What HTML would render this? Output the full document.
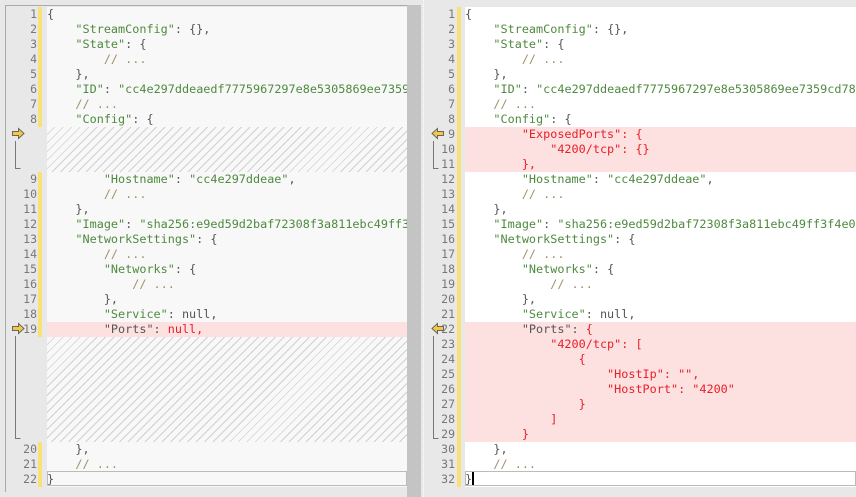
<!DOCTYPE html>
<html><head><meta charset="utf-8"><style>
*{margin:0;padding:0;box-sizing:border-box}
body{width:856px;height:497px;background:#e8e8e8;position:relative;overflow:hidden;font-family:"DejaVu Sans Mono","Liberation Mono",monospace;font-size:11.8px}
.abs{position:absolute}
.row{position:absolute;height:15px;line-height:15px;white-space:pre;overflow:hidden}
.num{position:absolute;height:15px;line-height:15px;text-align:right;color:#777;font-size:11.5px}
.s{color:#4e8a3e}.p{color:#555}.c{color:#a0906a}.r{color:#e8202a}
.hatch{position:absolute;background-color:#f8f8f8;background-image:repeating-linear-gradient(135deg,transparent 0 5px,#d0d0d0 5px 6px)}
</style></head><body>
<div class="abs" style="left:5px;top:5px;width:403px;height:487px;border-left:1px solid #aaa;border-top:1px solid #aaa"></div>
<div class="abs" style="left:47px;top:7px;width:360px;height:480px;background:#f8f8f8"></div>
<div class="abs" style="left:407px;top:5px;width:14px;height:492px;background:#c4c4c4"></div>
<div class="abs" style="left:423px;top:0;width:0;height:497px;border-left:1px dotted #fff"></div>
<div class="abs" style="left:465px;top:7px;width:391px;height:480px;background:#fff"></div>
<div class="hatch" style="left:47px;top:127px;width:360px;height:45px"></div>
<div class="hatch" style="left:47px;top:337px;width:360px;height:105px"></div>
<div id="L"></div><div id="R"></div>
<script>
const E=s=>s.replace(/&/g,'&amp;').replace(/</g,'&lt;');
function fmt(t){
 let out='';const re=/("[^"]*"?)|(\/\/ \.\.\.)|([^"\/]+)/g;let m;
 while(m=re.exec(t)){if(m[1])out+='<span class="s">'+E(m[1])+'</span>';else if(m[2])out+='<span class="c">'+m[2]+'</span>';else out+='<span class="p">'+E(m[3])+'</span>';}
 return out;}
const left=[
['{'],['    "StreamConfig": {},'],['    "State": {'],['        // ...'],['    },'],['    "ID": "cc4e297ddeaedf7775967297e8e5305869ee7359cd780a'],['    // ...'],['    "Config": {'],
'H','H','H',
['        "Hostname": "cc4e297ddeae",'],['        // ...'],['    },'],['    "Image": "sha256:e9ed59d2baf72308f3a811ebc49ff3f4e01'],['    "NetworkSettings": {'],['        // ...'],['        "Networks": {'],['            // ...'],['        },'],['        "Service": null,'],
['P','        <span class="p">"Ports": </span><span class="r">null,</span>'],
'H','H','H','H','H','H','H',
['    },'],['    // ...'],['}']];
const right=[
['{'],['    "StreamConfig": {},'],['    "State": {'],['        // ...'],['    },'],['    "ID": "cc4e297ddeaedf7775967297e8e5305869ee7359cd780a'],['    // ...'],['    "Config": {'],
['R','        "ExposedPorts": {'],['R','            "4200/tcp": {}'],['R','        },'],
['        "Hostname": "cc4e297ddeae",'],['        // ...'],['    },'],['    "Image": "sha256:e9ed59d2baf72308f3a811ebc49ff3f4e01'],['    "NetworkSettings": {'],['        // ...'],['        "Networks": {'],['            // ...'],['        },'],['        "Service": null,'],
['P','        <span class="p">"Ports": </span><span class="r">{</span>'],
['R','            "4200/tcp": ['],['R','                {'],['R','                    "HostIp": "",'],['R','                    "HostPort": "4200"'],['R','                }'],['R','            ]'],['R','        }'],
['    },'],['    // ...'],['}']];
function build(arr,cx,cw,numR,barX,ytop){
 let h='';let n=0;
 arr.forEach((r,i)=>{const y=ytop+i*15;
  if(r==='H')return;
  n++;
  h+=`<div class="num" style="left:${numR-30}px;width:30px;top:${y}px">${n}</div>`;
  h+=`<div class="abs" style="left:${barX}px;top:${y}px;width:4px;height:15px;background:#f8e278"></div>`;
  let txt,bg='';
  if(r.length===2){ if(r[0]==='R'){txt='<span class="r">'+E(r[1])+'</span>';}else txt=r[1]; bg='background:#fde0e0;';}
  else txt=fmt(r[0]);
  h+=`<div class="row" style="left:${cx}px;top:${y}px;width:${cw}px;${bg}">${txt}</div>`;
 });
 return h;}
document.getElementById('L').innerHTML=build(left,47,360,37,38,7);
document.getElementById('R').innerHTML=build(right,465,391,455,457,7);
</script>
<div class="abs" style="left:47px;top:471px;width:360px;height:15px;border:1px solid #bbb"></div>
<div class="abs" style="left:465px;top:471px;width:391px;height:15px;border:1px solid #bbb"></div>
<div class="abs" style="left:472px;top:472px;width:2px;height:13px;background:#000"></div>
<svg class="abs" style="left:0;top:0" width="856" height="497">
<g fill="#f5c842" stroke="#666" stroke-width="1">
<path d="M12.5 131.5h6v-3l5.5 5-5.5 5v-3h-6z"/>
<path d="M12.5 326.5h6v-3l5.5 5-5.5 5v-3h-6z"/>
<path d="M443.5 131.5h-6v-3l-5.5 5 5.5 5v-3h6z"/>
<path d="M443.5 326.5h-6v-3l-5.5 5 5.5 5v-3h6z"/>
</g>
<g fill="none" stroke="#777" stroke-width="1">
<path d="M15.5 141v27.5h5"/>
<path d="M15.5 336v102.5h5"/>
<path d="M433.5 141v27.5h5"/>
<path d="M433.5 336v102.5h5"/>
</g>
</svg>
</body></html>
